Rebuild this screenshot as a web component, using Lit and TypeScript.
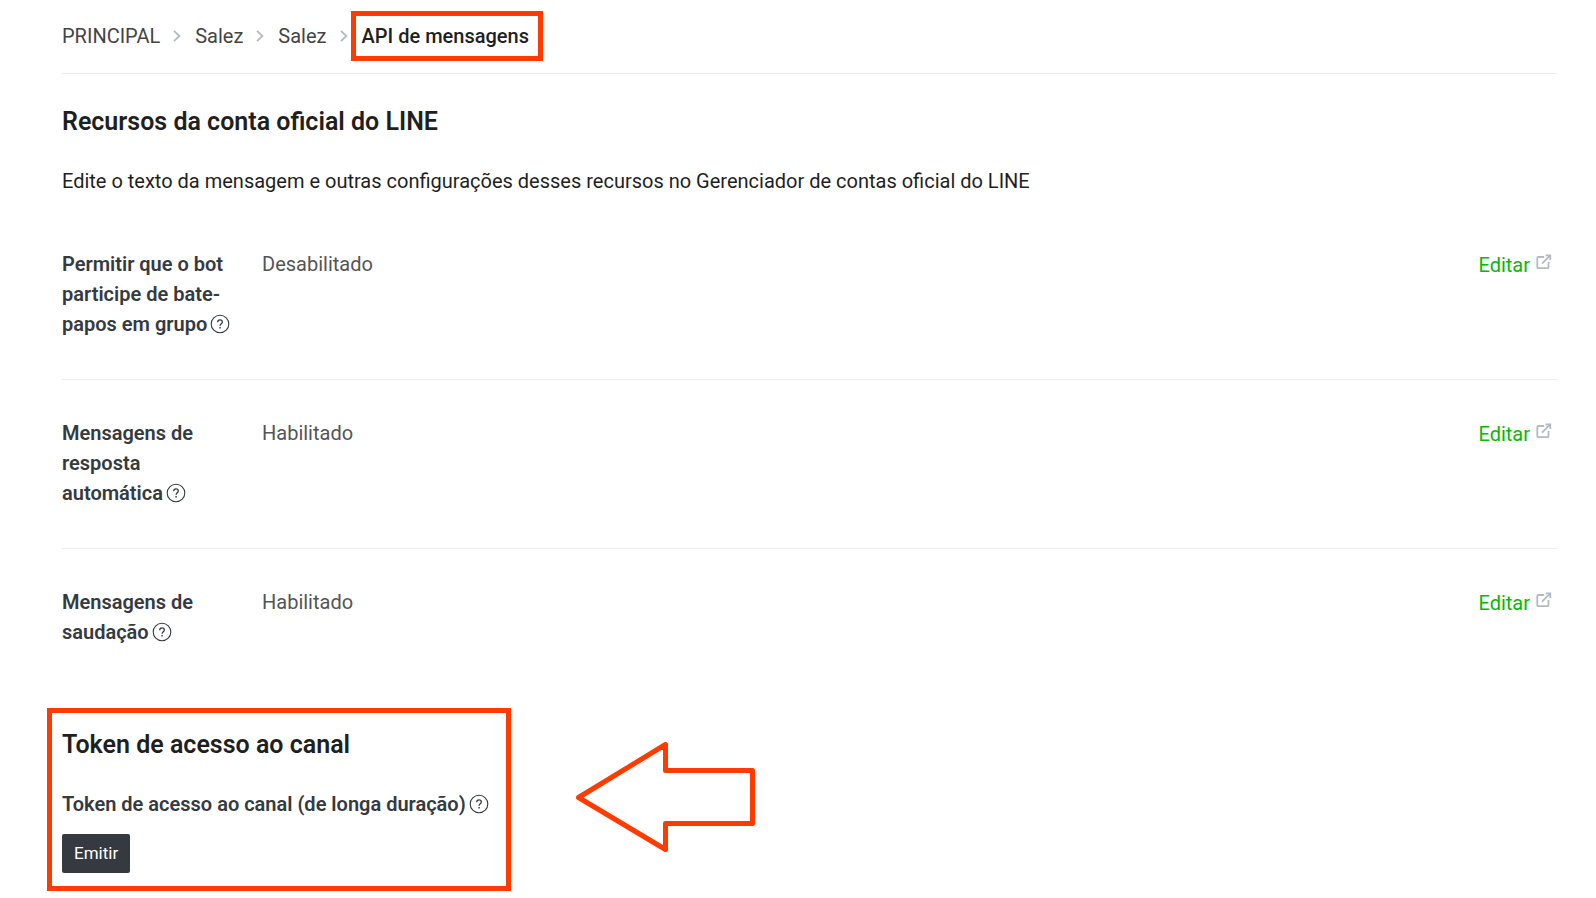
import { LitElement, html, css, svg } from "lit";
import { customElement } from "lit/decorators.js";

interface Feature {
  label: string;
  value: string;
}

const FEATURES: Feature[] = [
  { label: "Permitir que o bot participe de bate-papos em grupo", value: "Desabilitado" },
  { label: "Mensagens de resposta automática", value: "Habilitado" },
  { label: "Mensagens de saudação", value: "Habilitado" },
];

const chevron = html`<svg class="chevron" viewBox="0 0 8 12" aria-hidden="true">
  ${svg`<path d="M1 0.8 L6.4 6 L1 11.2" fill="none" stroke="#b4bac3" stroke-width="1.8"/>`}
</svg>`;

const helpIcon = html`<svg class="help-icon" viewBox="0 0 20 20" aria-hidden="true">
  ${svg`<circle cx="10" cy="10" r="8.8" fill="none" stroke="currentColor" stroke-width="1.1"/>
  <path d="M7.7 8.2 C7.7 6.7 8.6 5.9 10 5.9 C11.4 5.9 12.3 6.7 12.3 7.9 C12.3 9.7 10.1 9.8 10.1 11.8" fill="none" stroke="currentColor" stroke-width="1.3"/>
  <path d="M9.4 13.1h1.4v1.4h-1.4z" fill="currentColor"/>`}
</svg>`;

const externalIcon = html`<svg class="external" viewBox="0 0 16 16" aria-hidden="true">
  ${svg`<path d="M8 3H2.3Q1.3 3 1.3 4V13.2Q1.3 14.2 2.3 14.2H11.5Q12.5 14.2 12.5 13.2V8" fill="none" stroke="#b4bac3" stroke-width="1.8"/>
  <path d="M6 9.6 L14 1.6 M9.6 1.4H14.3V6" fill="none" stroke="#b4bac3" stroke-width="1.8"/>`}
</svg>`;

@customElement("app-root")
export class AppRoot extends LitElement {
  static styles = css`
    :host {
      display: block;
      box-sizing: border-box;
      padding: 0 39px 24px 62px;
      background: #fff;
      color: #1f1f1f;
      font: 400 20px/30px Roboto, sans-serif;
    }
    .crumbs {
      border-bottom: 1px solid #ebebeb;
      padding: 21px 0 22px;
    }
    .crumbs ol {
      display: flex;
      align-items: center;
      margin: 0;
      padding: 0;
      list-style: none;
    }
    .crumbs li {
      display: flex;
      align-items: center;
    }
    .crumbs a {
      color: #444;
      text-decoration: none;
    }
    .chevron {
      width: 8px;
      height: 12px;
      margin: 0 14px 0 13px;
    }
    .current {
      position: relative;
      color: #1f1f1f;
      font-weight: 500;
    }
    .current::after {
      content: "";
      position: absolute;
      inset: -10px -14px -10px -11px;
      border: 5px solid #ff3b00;
      pointer-events: none;
    }
    h2 {
      margin: 0;
      font-size: 25px;
      line-height: 36px;
      font-weight: 600;
    }
    .features {
      padding-top: 30px;
    }
    .lead {
      margin: 26px 0 15px;
    }
    .row {
      display: grid;
      grid-template-columns: 170px 1fr auto;
      column-gap: 30px;
      margin: 0;
      padding: 38px 5px 40px 0;
    }
    .row + .row {
      border-top: 1px solid #ebebeb;
    }
    dt,
    h3 {
      margin: 0;
      color: #353a40;
      font-size: 20px;
      line-height: 30px;
      font-weight: 600;
    }
    dd {
      margin: 0;
      color: #555;
    }
    .help {
      display: inline-block;
      width: 20px;
      height: 20px;
      margin: 0 0 0 3px;
      padding: 0;
      border: 0;
      background: none;
      color: #353a40;
      vertical-align: -3px;
      line-height: 0;
    }
    .help-icon {
      width: 20px;
      height: 20px;
    }
    .edit {
      display: flex;
      gap: 6px;
      padding-top: 1px;
      color: #06b906;
      text-decoration: none;
    }
    .external {
      width: 16px;
      height: 16px;
      margin-top: 4px;
    }
    .token {
      position: relative;
      width: fit-content;
      margin-top: 40px;
    }
    .token::after {
      content: "";
      position: absolute;
      inset: -19px -22px -18px -15px;
      border: 5px solid #ff3b00;
      pointer-events: none;
    }
    .token h3 {
      margin: 26px 0 15px;
    }
    .issue {
      display: block;
      height: 39px;
      padding: 0 12px 2px;
      border: 0;
      border-radius: 2px;
      background: #353a40;
      color: #fff;
      font: 400 17px/24px Roboto, sans-serif;
    }
    .arrow {
      position: absolute;
      left: calc(100% + 87px);
      top: 15px;
      width: 180px;
      height: 110px;
    }
  `;

  private labelWithHelp(text: string) {
    return html`${text}<button class="help" type="button" aria-label="Ajuda">${helpIcon}</button>`;
  }

  render() {
    return html`
      <nav class="crumbs" aria-label="Navegação">
        <ol>
          <li><a href="#">PRINCIPAL</a>${chevron}</li>
          <li><a href="#">Salez</a>${chevron}</li>
          <li><a href="#">Salez</a>${chevron}</li>
          <li class="current" aria-current="page">API de mensagens</li>
        </ol>
      </nav>
      <main>
        <section class="features">
          <h2>Recursos da conta oficial do LINE</h2>
          <p class="lead">
            Edite o texto da mensagem e outras configurações desses recursos no Gerenciador de contas oficial do LINE
          </p>
          <div>
            ${FEATURES.map(
              (f) => html`<dl class="row">
                <dt>${this.labelWithHelp(f.label)}</dt>
                <dd>${f.value}</dd>
                <dd><a class="edit" href="#">Editar ${externalIcon}</a></dd>
              </dl>`
            )}
          </div>
        </section>
        <section class="token">
          <h2>Token de acesso ao canal</h2>
          <h3>${this.labelWithHelp("Token de acesso ao canal (de longa duração)")}</h3>
          <button class="issue" type="button">Emitir</button>
          <svg class="arrow" viewBox="0 0 180 110" aria-hidden="true">
            <path
              d="M2.5 55.5 L89.5 2.5 V28.5 H176.5 V81.5 H89.5 V107.5 Z"
              fill="none" stroke="#ff3b00" stroke-width="5" stroke-linejoin="round"
            />
          </svg>
        </section>
      </main>
    `;
  }
}
